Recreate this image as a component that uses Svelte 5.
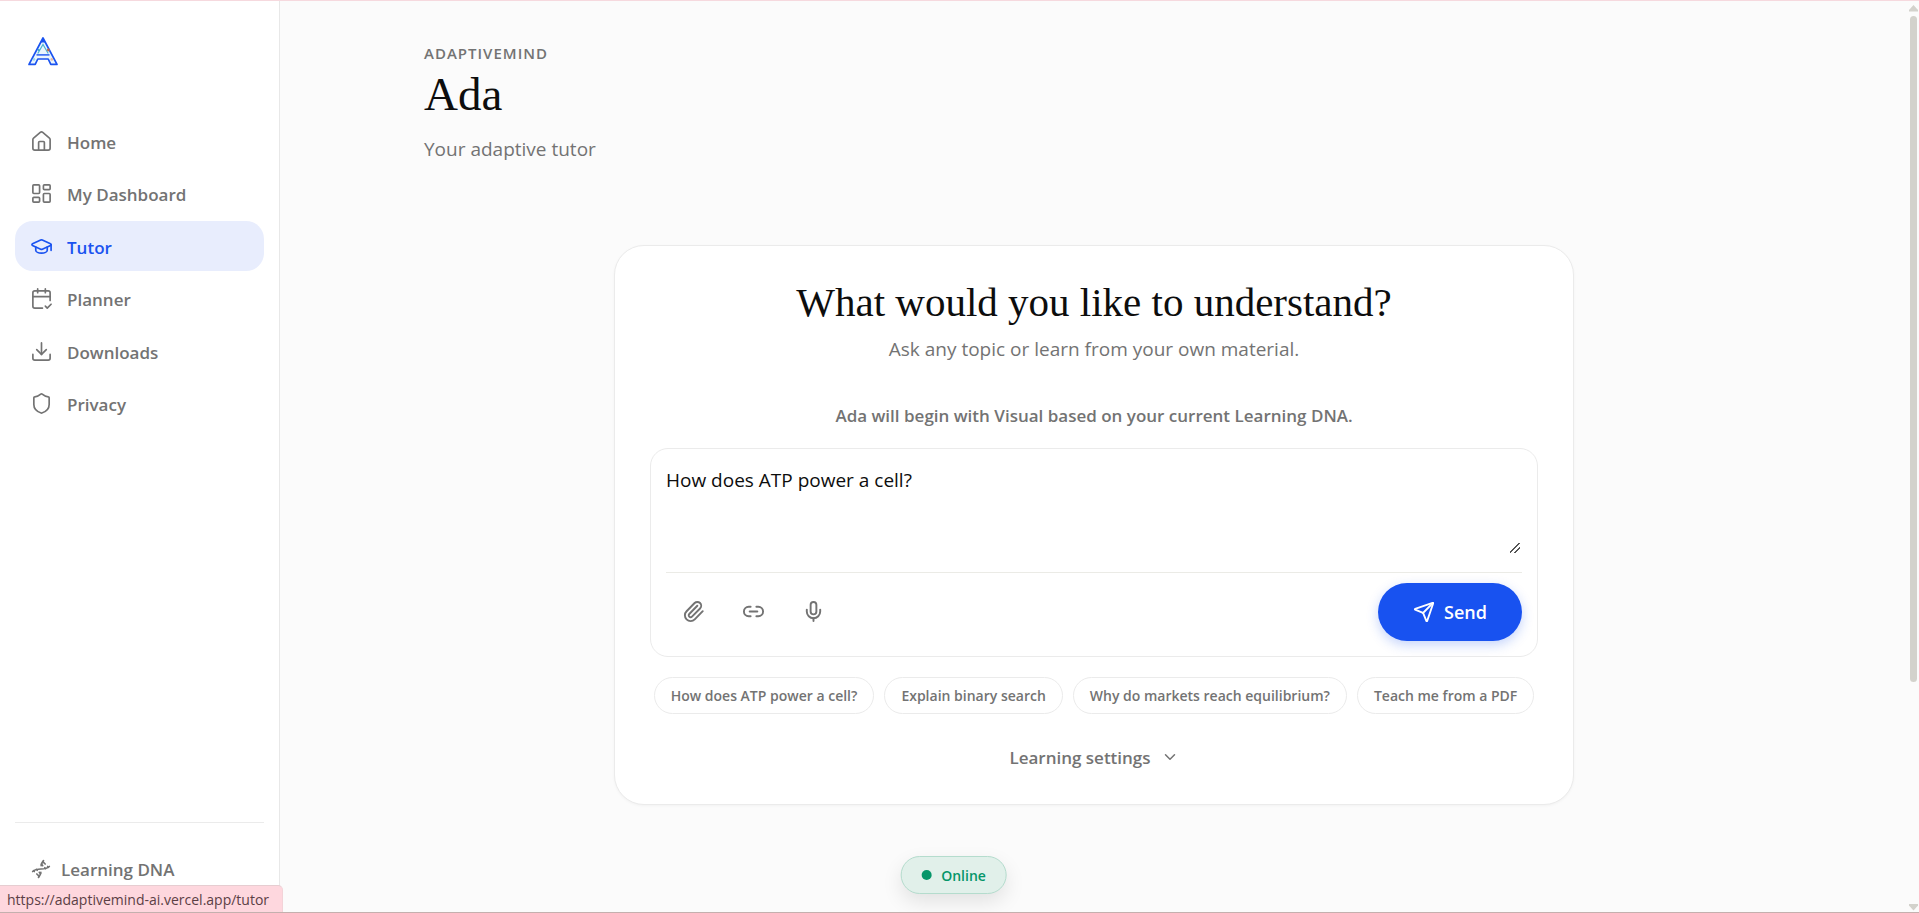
<script>
  const nav = [
    {
      label: 'Home',
      paths: [
        'M15 21v-8a1 1 0 0 0-1-1h-4a1 1 0 0 0-1 1v8',
        'M3 10a2 2 0 0 1 .709-1.528l7-6a2 2 0 0 1 2.582 0l7 6A2 2 0 0 1 21 10v9a2 2 0 0 1-2 2H5a2 2 0 0 1-2-2z'
      ]
    },
    {
      label: 'My Dashboard',
      paths: [
        'M4 3h5a1 1 0 0 1 1 1v7a1 1 0 0 1-1 1H4a1 1 0 0 1-1-1V4a1 1 0 0 1 1-1z',
        'M15 3h5a1 1 0 0 1 1 1v3a1 1 0 0 1-1 1h-5a1 1 0 0 1-1-1V4a1 1 0 0 1 1-1z',
        'M15 12h5a1 1 0 0 1 1 1v7a1 1 0 0 1-1 1h-5a1 1 0 0 1-1-1v-7a1 1 0 0 1 1-1z',
        'M4 16h5a1 1 0 0 1 1 1v3a1 1 0 0 1-1 1H4a1 1 0 0 1-1-1v-3a1 1 0 0 1 1-1z'
      ]
    },
    {
      label: 'Tutor',
      active: true,
      paths: [
        'M21.42 10.922a1 1 0 0 0-.019-1.838L12.83 5.18a2 2 0 0 0-1.66 0L2.6 9.08a1 1 0 0 0 0 1.832l8.57 3.908a2 2 0 0 0 1.66 0z',
        'M22 10v6',
        'M6 12.5V16a6 3 0 0 0 12 0v-3.5'
      ]
    },
    {
      label: 'Planner',
      paths: [
        'M8 2v4',
        'M16 2v4',
        'M21 14V6a2 2 0 0 0-2-2H5a2 2 0 0 0-2 2v14a2 2 0 0 0 2 2h8',
        'M3 10h18',
        'm16 20 2 2 4-4'
      ]
    },
    {
      label: 'Downloads',
      paths: ['M12 15V3', 'M21 15v4a2 2 0 0 1-2 2H5a2 2 0 0 1-2-2v-4', 'm7 10 5 5 5-5']
    },
    {
      label: 'Privacy',
      paths: [
        'M20 13c0 5-3.5 7.5-7.66 8.95a1 1 0 0 1-.67-.01C7.5 20.5 4 18 4 13V6a1 1 0 0 1 1-1c2 0 4.5-1.2 6.24-2.72a1.17 1.17 0 0 1 1.52 0C14.51 3.81 17 5 19 5a1 1 0 0 1 1 1z'
      ]
    }
  ];

  const dna = [
    'm10 16 1.5 1.5',
    'm14 8-1.5-1.5',
    'M15 2c-1.798 1.998-2.518 3.995-2.807 5.993',
    'm16.5 10.5 1 1',
    'm17 6-2.891-2.891',
    'M2 15c6.667-6 13.333 0 20-6',
    'm20 9 .891.891',
    'M3.109 14.109 4 15',
    'm6.5 12.5 1 1',
    'm7 18 2.891 2.891',
    'M9 22c1.798-1.998 2.518-3.995 2.807-5.993'
  ];

  const tools = [
    {
      label: 'Attach a file',
      paths: [
        'm16 6-8.414 8.586a2 2 0 0 0 2.829 2.829l8.414-8.586a4 4 0 1 0-5.657-5.657l-8.379 8.551a6 6 0 1 0 8.485 8.485l8.379-8.551'
      ]
    },
    {
      label: 'Add a link',
      paths: ['M9 17H7A5 5 0 0 1 7 7h2', 'M15 7h2a5 5 0 1 1 0 10h-2', 'M8 12h8']
    },
    {
      label: 'Speak',
      paths: [
        'M12 19v3',
        'M19 10v2a7 7 0 0 1-14 0v-2',
        'M12 2a3 3 0 0 1 3 3v7a3 3 0 0 1-6 0V5a3 3 0 0 1 3-3z'
      ]
    }
  ];

  const send = [
    'M14.536 21.686a.5.5 0 0 0 .937-.024l6.5-19a.496.496 0 0 0-.635-.635l-19 6.5a.5.5 0 0 0-.024.937l7.93 3.18a2 2 0 0 1 1.112 1.11z',
    'm21.854 2.147-10.94 10.939'
  ];

  const suggestions = [
    'How does ATP power a cell?',
    'Explain binary search',
    'Why do markets reach equilibrium?',
    'Teach me from a PDF'
  ];

  let question = $state('How does ATP power a cell?');
</script>

{#snippet icon(paths, size, weight)}
  <svg
    class="icon"
    width={size}
    height={size}
    viewBox="0 0 24 24"
    fill="none"
    stroke="currentColor"
    stroke-width={weight}
    stroke-linecap="round"
    stroke-linejoin="round"
    aria-hidden="true"
  >
    {#each paths as d}<path {d} />{/each}
  </svg>
{/snippet}

<div class="app">
  <aside class="sidebar">
    <a class="logo" href="#home" aria-label="AdaptiveMind">
      <svg width="32" height="32" viewBox="0 0 32 32" fill="none" aria-hidden="true">
        <path d="M16 3 30 29.400h-6.200L21.200 24H10.800L8.200 29.400H2z" fill="#eaf5fd" stroke="#1a53f0" stroke-width="1.700" stroke-linejoin="round" />
        <path d="M16 2.500 18.500 7.500h-5z" fill="#1a53f0" />
        <path d="M9.500 19.900h13" stroke="#1a53f0" stroke-width="1.400" />
        <path d="M10.800 18.500 16 9.500l5.200 9" stroke="#4bb4d2" stroke-width="1.200" />
        <circle cx="11.800" cy="15" r="1.100" fill="#35a5c4" />
        <circle cx="21.300" cy="15" r="1.400" fill="#bd6a4c" />
        <circle cx="7" cy="24.400" r="1.300" fill="#9edbe6" />
        <circle cx="24.800" cy="24.400" r="1.300" fill="#e6b8a4" />
      </svg>
    </a>
    <nav aria-label="Main">
      {#each nav as item}
        <a
          class="nav-item"
          class:active={item.active}
          href="#{item.label.toLowerCase().replace(' ', '-')}"
          aria-current={item.active ? 'page' : undefined}
        >
          {@render icon(item.paths, 23, 1.75)}
          <span>{item.label}</span>
        </a>
      {/each}
    </nav>
    <div class="sidebar-foot">
      <a class="dna" href="#learning-dna">
        {@render icon(dna, 20, 2)}
        <span>Learning DNA</span>
      </a>
    </div>
  </aside>

  <main>
    <div class="content">
      <header>
        <p class="eyebrow">ADAPTIVEMIND</p>
        <h1>Ada</h1>
        <p class="tagline">Your adaptive tutor</p>
      </header>

      <section class="card">
        <h2>What would you like to understand?</h2>
        <p class="lead">Ask any topic or learn from your own material.</p>
        <p class="hint">Ada will begin with Visual based on your current Learning DNA.</p>

        <form class="composer" onsubmit={(e) => e.preventDefault()}>
          <textarea aria-label="Your question" bind:value={question}></textarea>
          <div class="actions">
            {#each tools as tool}
              <button type="button" class="tool" aria-label={tool.label}>
                {@render icon(tool.paths, 23, 2)}
              </button>
            {/each}
            <button type="submit" class="send">
              {@render icon(send, 22, 2)}
              <span>Send</span>
            </button>
          </div>
        </form>

        <div class="chips">
          {#each suggestions as text}
            <button type="button" class="chip" onclick={() => (question = text)}>{text}</button>
          {/each}
        </div>

        <button type="button" class="settings">
          <span>Learning settings</span>
          {@render icon(['m6 9 6 6 6-6'], 18, 2)}
        </button>
      </section>
    </div>
  </main>

  <div class="scrollbar" aria-hidden="true">
    <svg width="9" height="7" viewBox="0 0 9 7"><path d="M4.500 0 9 5v1.500H0V5z" fill="#d3d2cc" /></svg>
    <div class="track"><div class="thumb"></div></div>
    <svg width="9" height="7" viewBox="0 0 9 7"><path d="M4.500 6.500 9 1.500V0H0v1.500z" fill="#d3d2cc" /></svg>
  </div>

  <div class="online" role="status"><i></i>Online</div>
  <div class="link-preview">https://adaptivemind-ai.vercel.app/tutor</div>
</div>

<style>
  :global(body) {
    background: #fbfbfb;
  }
  * {
    box-sizing: border-box;
  }
  .app {
    display: flex;
    position: relative;
    height: 100vh;
    overflow: hidden;
    border-top: 1px solid #f6d9de;
    border-bottom: 1px solid #c4b0ae;
    background: #fbfbfb;
    color: #0d0d0d;
    font-family: 'Open Sans', 'Noto Sans', sans-serif;
    font-size: 17px;
  }
  p, h1, h2 {
    margin: 0;
  }
  a {
    color: inherit;
    text-decoration: none;
  }
  button, textarea {
    font: inherit;
    color: inherit;
    margin: 0;
  }
  button {
    border: 0;
    background: none;
    padding: 0;
    cursor: pointer;
  }
  .icon {
    display: block;
    flex: none;
  }

  .sidebar {
    display: flex;
    flex-direction: column;
    flex: none;
    width: 280px;
    padding: 34px 15px 0;
    border-right: 1px solid #e8e8e8;
    background: #fff;
    color: #737373;
    font-weight: 600;
  }
  .logo {
    align-self: flex-start;
    margin-left: 12px;
    margin-bottom: 49px;
  }
  .logo svg {
    display: block;
  }
  nav {
    display: flex;
    flex-direction: column;
    justify-content: space-between;
    min-height: 313px;
  }
  .nav-item {
    display: flex;
    align-items: center;
    gap: 14px;
    height: 50px;
    padding: 0 15px;
    border-radius: 18px;
  }
  .nav-item span {
    padding-top: 2px;
  }
  .nav-item.active {
    background: #e8edfd;
    color: #1a53f0;
  }
  .sidebar-foot {
    margin-top: auto;
    padding-top: 21px;
    border-top: 1px solid #ebebeb;
  }
  .dna {
    display: flex;
    align-items: center;
    gap: 10px;
    height: 50px;
    padding: 0 16px;
    margin-bottom: 18px;
  }

  main {
    flex: 1;
    min-width: 0;
    padding: 0 40px;
  }
  .content {
    max-width: 1340px;
    margin: 0 auto;
    padding-top: 42px;
  }
  .eyebrow {
    color: #737373;
    font-size: 15px;
    font-weight: 600;
    line-height: 20px;
    letter-spacing: 1px;
  }
  h1, h2 {
    font-family: 'Liberation Serif', serif;
    font-weight: 400;
  }
  h1 {
    margin-top: 1px;
    font-size: 47px;
    line-height: 60px;
  }
  .tagline, .lead {
    color: #737373;
    font-size: 19px;
    line-height: 30px;
  }
  .tagline {
    margin-top: 10px;
  }

  .card {
    display: flex;
    flex-direction: column;
    align-items: center;
    max-width: 960px;
    margin: 81px auto 0;
    padding: 30px 35px 22px;
    border: 1px solid #ebebeb;
    border-radius: 30px;
    background: #fff;
    box-shadow: 0 1px 3px rgba(0, 0, 0, 0.04);
  }
  h2 {
    font-size: 41px;
    line-height: 52px;
  }
  .lead {
    margin-top: 6px;
  }
  .hint {
    margin-top: 40px;
    color: #737373;
    font-weight: 600;
    line-height: 24px;
  }
  .composer {
    align-self: stretch;
    margin-top: 20px;
    padding: 15px;
    border: 1px solid #ebebeb;
    border-radius: 18px;
  }
  textarea {
    display: block;
    width: 100%;
    height: 91px;
    padding: 0;
    border: 0;
    outline: 0;
    background: transparent;
    font-size: 19px;
    line-height: 32px;
    resize: vertical;
  }
  textarea::-webkit-resizer {
    background: linear-gradient(
        135deg,
        transparent 42%,
        #555 43% 54%,
        transparent 55% 67%,
        #555 68% 78%,
        transparent 79%
      )
      3px 3px / 10px 10px no-repeat;
  }
  .actions {
    display: flex;
    align-items: flex-start;
    gap: 6px;
    margin-top: 17px;
    padding-top: 10px;
    border-top: 1px solid #ebebe6;
    color: #737373;
  }
  .tool {
    display: grid;
    place-items: center;
    width: 54px;
    height: 56px;
  }
  .send {
    display: flex;
    align-items: center;
    justify-content: center;
    gap: 9px;
    width: 144px;
    height: 58px;
    margin-left: auto;
    border-radius: 29px;
    background: #1852f0;
    color: #fff;
    font-size: 18px;
    font-weight: 600;
    box-shadow: 0 4px 12px rgba(24, 82, 240, 0.25);
  }
  .chips {
    display: flex;
    flex-wrap: wrap;
    justify-content: center;
    gap: 10px;
    margin-top: 20px;
  }
  .chip {
    height: 37px;
    padding: 0 16px;
    border: 1px solid #ebebeb;
    border-radius: 19px;
    color: #737373;
    font-size: 14px;
    font-weight: 600;
  }
  .settings {
    display: flex;
    align-items: center;
    gap: 10px;
    height: 50px;
    margin-top: 18px;
    color: #737373;
    font-weight: 600;
  }

  .scrollbar {
    display: flex;
    flex-direction: column;
    align-items: center;
    flex: none;
    width: 11px;
    padding: 4px 0 1px;
  }
  .track {
    flex: 1;
    padding-top: 4px;
  }
  .thumb {
    width: 7px;
    height: 75%;
    border-radius: 4px;
    background: #d3d2cc;
  }

  .online {
    position: absolute;
    bottom: 18px;
    left: 50%;
    display: flex;
    align-items: center;
    gap: 10px;
    height: 38px;
    padding: 0 20px;
    margin-left: -6px;
    border: 1px solid #b4dccd;
    border-radius: 19px;
    background: #e1f0ea;
    color: #059669;
    font-size: 14px;
    font-weight: 600;
    box-shadow: 0 8px 20px rgba(0, 0, 0, 0.1);
    transform: translateX(-50%);
  }
  .online i {
    width: 10px;
    height: 10px;
    border-radius: 50%;
    background: #059669;
  }
  .link-preview {
    position: absolute;
    bottom: 0;
    left: 0;
    padding: 2px 13px 0 7px;
    border-top: 1px solid #e6cdd1;
    border-right: 1px solid #f3d3d8;
    border-top-right-radius: 5px;
    background: #fed7de;
    color: #5b4045;
    font-size: 14px;
    line-height: 24px;
  }
</style>
